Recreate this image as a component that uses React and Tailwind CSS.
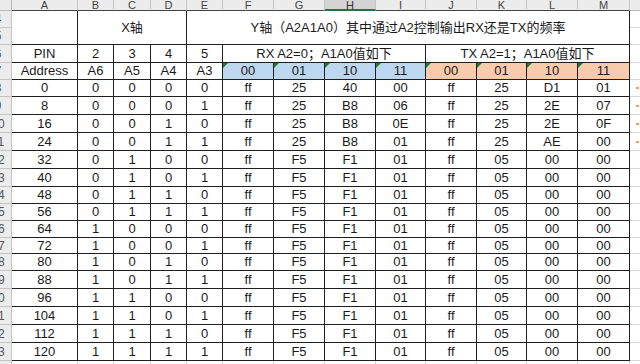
import React from 'react';

const letters = ['A', 'B', 'C', 'D', 'E', 'F', 'G', 'H', 'I', 'J', 'K', 'L', 'M'];

const rxTop = [
  ['ff', '25', '40', '00'],
  ['ff', '25', 'B8', '06'],
  ['ff', '25', 'B8', '0E'],
  ['ff', '25', 'B8', '01'],
];
const txTop = [
  ['ff', '25', 'D1', '01'],
  ['ff', '25', '2E', '07'],
  ['ff', '25', '2E', '0F'],
  ['ff', '25', 'AE', '00'],
];

const rows = [...Array(16)].map((_, i) => ({
  addr: i * 8,
  bits: [(i >> 3) & 1, (i >> 2) & 1, (i >> 1) & 1, i & 1],
  rx: rxTop[i] || ['ff', 'F5', 'F1', '01'],
  tx: txTop[i] || ['ff', '05', '00', '00'],
  mark: i < 4,
}));

const cell =
  'flex items-center justify-center border-r border-b border-[#1f1f1f] text-[13px] text-[#1a1a1a] overflow-hidden whitespace-nowrap';

function RowHead({ n }) {
  return (
    <div className="overflow-hidden bg-[#ececec] border-r border-b border-[#c4c4c4]">
      <div className="ml-[-16px] w-[28px] h-full flex items-center justify-center text-[12px] text-[#555]">
        {n}
      </div>
    </div>
  );
}

function Edge({ mark }) {
  return (
    <div className="flex items-center pl-[6px] border-b border-[#d6d6d6] bg-white">
      {mark && <span className="block w-[3px] h-[2px] bg-[#e9a25a]"></span>}
    </div>
  );
}

function Tab({ children, tone }) {
  return (
    <div className={`relative ${cell} ${tone}`}>
      <span className="absolute left-0 top-0 w-0 h-0 border-t-[5px] border-r-[5px] border-t-[#1d7a2e] border-r-transparent"></span>
      {children}
    </div>
  );
}

export default function App() {
  return (
    <div className="w-[640px] h-[364px] overflow-hidden bg-white font-['Liberation_Sans','Noto_Sans_CJK_SC',sans-serif]">
      <div className="grid grid-cols-[12px_66px_36px_37px_36px_36px_51px_51px_51px_50px_51px_50px_51px_52px_10px] grid-rows-[11px_17px_17px_18px_17px_17px_18px_18px_18px_18px_18px_17px_17px_17px_16px_17px_18px_18px_18px_18px_18px_3px]">
        {/* column letters */}
        <div className="bg-[#ececec] border-r border-b border-[#b8b8b8]"></div>
        {letters.map((l) =>
          l === 'H' ? (
            <div
              key={l}
              className="flex items-start justify-center bg-[#d4d4d4] border-r border-[#c4c4c4] border-b-2 border-b-[#217346] text-[11px] text-[#333] leading-[10px]"
            >
              {l}
            </div>
          ) : (
            <div
              key={l}
              className="flex items-start justify-center bg-[#ececec] border-r border-[#c4c4c4] border-b border-b-[#444] text-[11px] text-[#444] leading-[10px]"
            >
              {l}
            </div>
          )
        )}
        <div className="bg-[#ececec] border-b border-[#b8b8b8]"></div>

        {/* title rows 4-5 */}
        <RowHead n={4} />
        <div className={`${cell} row-span-2`}></div>
        <div className={`${cell} col-span-3 row-span-2`}>X轴</div>
        <div className={`${cell} col-span-9 row-span-2`}>
          Y轴（A2A1A0）其中通过A2控制输出RX还是TX的频率
        </div>
        <Edge />
        <RowHead n={5} />
        <Edge />

        {/* PIN row */}
        <RowHead n={6} />
        <div className={cell}>PIN</div>
        <div className={cell}>2</div>
        <div className={cell}>3</div>
        <div className={cell}>4</div>
        <div className={cell}>5</div>
        <div className={`${cell} col-span-4`}>RX A2=0；A1A0值如下</div>
        <div className={`${cell} col-span-4`}>TX A2=1；A1A0值如下</div>
        <Edge />

        {/* Address row */}
        <RowHead n={7} />
        <div className={cell}>Address</div>
        <div className={cell}>A6</div>
        <div className={cell}>A5</div>
        <div className={cell}>A4</div>
        <div className={cell}>A3</div>
        {['00', '01', '10', '11'].map((v) => (
          <Tab key={'rx' + v} tone="bg-[#bdd7ee]">
            {v}
          </Tab>
        ))}
        {['00', '01', '10', '11'].map((v) => (
          <Tab key={'tx' + v} tone="bg-[#f8cbad]">
            {v}
          </Tab>
        ))}
        <Edge />

        {/* data */}
        {rows.map((r, i) => (
          <React.Fragment key={r.addr}>
            <RowHead n={8 + i} />
            <div className={cell}>{r.addr}</div>
            {r.bits.map((b, j) => (
              <div key={'b' + j} className={cell}>
                {b}
              </div>
            ))}
            {r.rx.map((v, j) => (
              <div key={'r' + j} className={cell}>
                {v}
              </div>
            ))}
            {r.tx.map((v, j) => (
              <div key={'t' + j} className={cell}>
                {v}
              </div>
            ))}
            <Edge mark={r.mark} />
          </React.Fragment>
        ))}

        {/* partial next row */}
        <div className="bg-[#ececec] border-r border-[#c4c4c4]"></div>
        {letters.map((l) => (
          <div key={'p' + l} className="border-r border-[#d6d6d6]"></div>
        ))}
        <div></div>
      </div>
    </div>
  );
}
